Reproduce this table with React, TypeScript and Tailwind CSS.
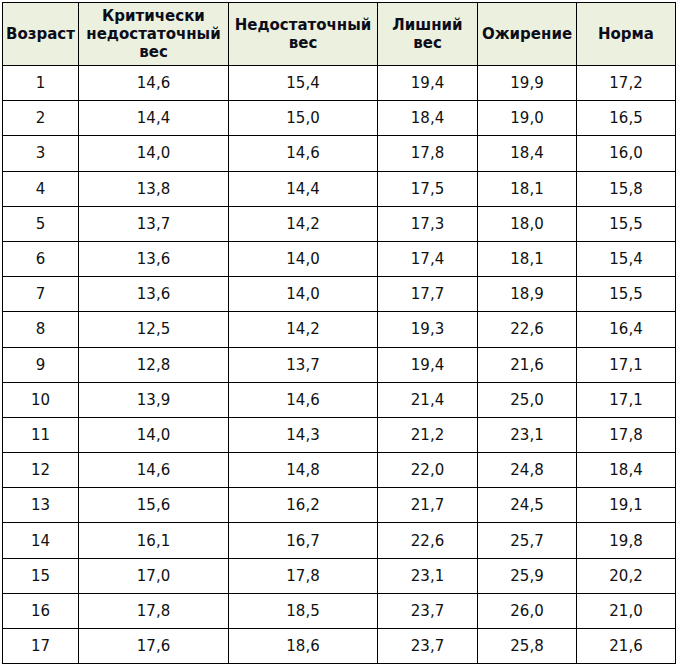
import React from "react";

const rows: [number, string, string, string, string, string][] = [
  [1, "14,6", "15,4", "19,4", "19,9", "17,2"],
  [2, "14,4", "15,0", "18,4", "19,0", "16,5"],
  [3, "14,0", "14,6", "17,8", "18,4", "16,0"],
  [4, "13,8", "14,4", "17,5", "18,1", "15,8"],
  [5, "13,7", "14,2", "17,3", "18,0", "15,5"],
  [6, "13,6", "14,0", "17,4", "18,1", "15,4"],
  [7, "13,6", "14,0", "17,7", "18,9", "15,5"],
  [8, "12,5", "14,2", "19,3", "22,6", "16,4"],
  [9, "12,8", "13,7", "19,4", "21,6", "17,1"],
  [10, "13,9", "14,6", "21,4", "25,0", "17,1"],
  [11, "14,0", "14,3", "21,2", "23,1", "17,8"],
  [12, "14,6", "14,8", "22,0", "24,8", "18,4"],
  [13, "15,6", "16,2", "21,7", "24,5", "19,1"],
  [14, "16,1", "16,7", "22,6", "25,7", "19,8"],
  [15, "17,0", "17,8", "23,1", "25,9", "20,2"],
  [16, "17,8", "18,5", "23,7", "26,0", "21,0"],
  [17, "17,6", "18,6", "23,7", "25,8", "21,6"],
];

export default function App() {
  return (
    <div className="bg-white w-[680px] h-[668px] pt-[2px] pl-[2px]" style={{ fontFamily: '"DejaVu Sans", Verdana, sans-serif' }}>
      <table className="table-fixed border-collapse w-[674px] text-[15px] text-[#111]">
        <colgroup>
          <col className="w-[76px]" />
          <col className="w-[150px]" />
          <col className="w-[149px]" />
          <col className="w-[100px]" />
          <col className="w-[99px]" />
          <col className="w-[99px]" />
        </colgroup>
        <thead>
          <tr className="h-[63px] bg-[#ebf1de]">
            {["Возраст", "Критически недостаточный вес", "Недостаточный вес", "Лишний вес", "Ожирение", "Норма"].map((h, i) => (
              <th key={i} className="border border-black font-bold text-center leading-[18px] px-0 py-0 text-[#0d0d1a]">
                {h}
              </th>
            ))}
          </tr>
        </thead>
        <tbody>
          {rows.map((r, i) => (
            <tr key={i} className="h-[35.2px]">
              {r.map((c, j) => (
                <td key={j} className="border border-black text-center p-0 leading-[18px]">
                  {c}
                </td>
              ))}
            </tr>
          ))}
        </tbody>
      </table>
    </div>
  );
}
